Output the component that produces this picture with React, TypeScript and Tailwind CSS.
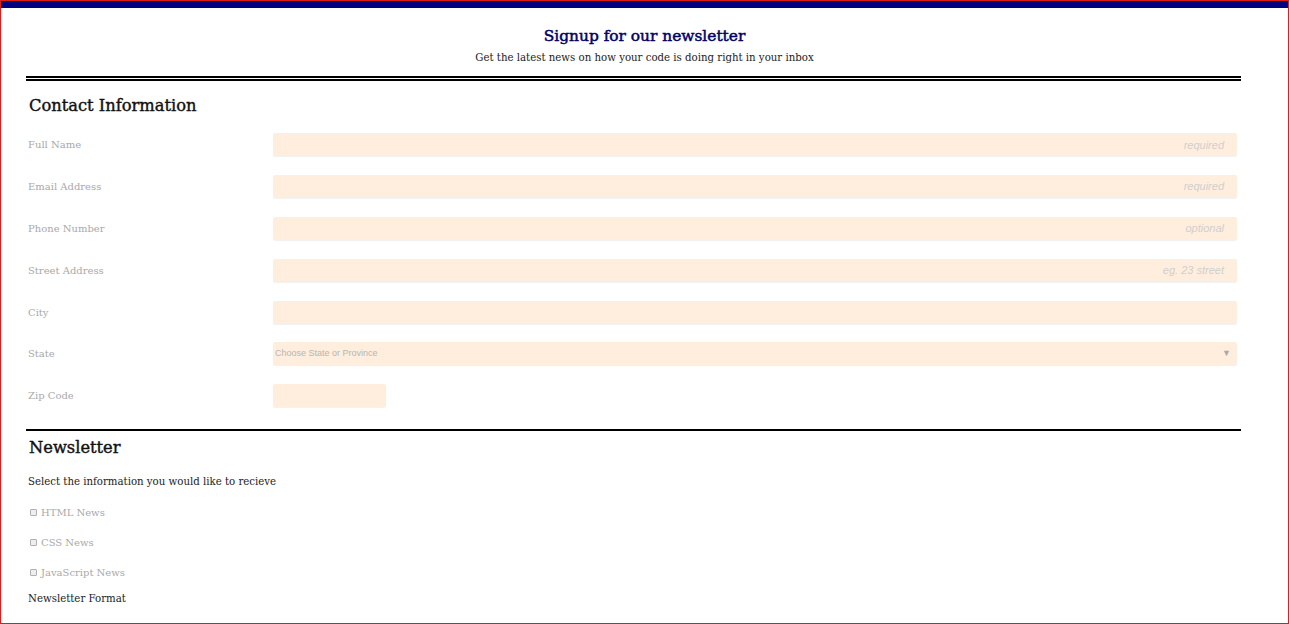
import React from 'react';

const serif = { fontFamily: '"DejaVu Serif", "Liberation Serif", serif' };

type Field = { label: string; hint?: string; kind?: 'text' | 'select' | 'zip' };

const fields: Field[] = [
  { label: 'Full Name', hint: 'required' },
  { label: 'Email Address', hint: 'required' },
  { label: 'Phone Number', hint: 'optional' },
  { label: 'Street Address', hint: 'eg. 23 street' },
  { label: 'City' },
  { label: 'State', kind: 'select' },
  { label: 'Zip Code', kind: 'zip' },
];

function FieldRow({ field }: { field: Field }) {
  return (
    <div className="flex items-center h-[41.8px]">
      <label className="w-[247px] pl-[2px] text-[10px] text-[#a9a9a9]">{field.label}</label>
      {field.kind === 'select' ? (
        <div className="flex-1 mr-[4px] h-[23px] rounded-[2px] bg-[#ffeedd] shadow-[0_1px_1px_rgba(0,0,0,0.06)] flex items-center justify-between pl-[2px] pr-[6px] font-['Liberation_Sans',sans-serif] text-[9px] text-[#b5b5b5]">
          <span>Choose State or Province</span>
          <span className="text-[9px] text-[#aaa]">▼</span>
        </div>
      ) : field.kind === 'zip' ? (
        <div className="w-[113px] h-[23px] rounded-[2px] bg-[#ffeedd] shadow-[0_1px_1px_rgba(0,0,0,0.06)]" />
      ) : (
        <div className="flex-1 mr-[4px] h-[23px] rounded-[2px] bg-[#ffeedd] shadow-[0_1px_1px_rgba(0,0,0,0.06)] flex items-center justify-end pr-[13px] font-['Liberation_Sans',sans-serif] italic text-[11px] text-[#cfcfcf]">
          {field.hint}
        </div>
      )}
    </div>
  );
}

function Check({ label }: { label: string }) {
  return (
    <div className="flex items-center h-[30px] pl-[4px] text-[10px] text-[#a9a9a9]">
      <span className="w-[7px] h-[7px] mr-[4px] rounded-[1px] border border-[#b0b0b0] bg-[#eee]" />
      {label}
    </div>
  );
}

export default function App() {
  return (
    <div className="w-[1289px] h-[624px] border border-[#e01b1b] overflow-hidden bg-white" style={serif}>
      <div className="h-[7px] bg-[#000080]" />
      <header className="text-center pt-[17px]">
        <h1 className="text-[15.4px] leading-[22px] text-[#000066] [-webkit-text-stroke:0.5px_#000066]">Signup for our newsletter</h1>
        <p className="text-[10.2px] leading-[14px] mt-[4px] text-[#222]">Get the latest news on how your code is doing right in your inbox</p>
      </header>
      <div className="ml-[25px] w-[1215px] mt-[11px]">
        <div className="border-t-[5px] border-double border-black" />
        <h2 className="text-[16.3px] text-[#111] pl-[3px] mt-[14px] leading-[22px] [-webkit-text-stroke:0.4px_#111]">Contact Information</h2>
        <div className="mt-[7px]">
          {fields.map((f) => (
            <FieldRow key={f.label} field={f} />
          ))}
        </div>
        <div className="border-t-2 border-black mt-[12px]" />
        <h2 className="text-[16.3px] text-[#111] pl-[3px] mt-[6px] leading-[22px] [-webkit-text-stroke:0.4px_#111]">Newsletter</h2>
        <p className="text-[10.2px] text-[#222] pl-[2px] mt-[15px] leading-[16px]">Select the information you would like to recieve</p>
        <div className="mt-[8px]">
          <Check label="HTML News" />
          <Check label="CSS News" />
          <Check label="JavaScript News" />
        </div>
        <p className="text-[10.2px] text-[#222] pl-[2px] leading-[16px] mt-[3px]">Newsletter Format</p>
      </div>
    </div>
  );
}
